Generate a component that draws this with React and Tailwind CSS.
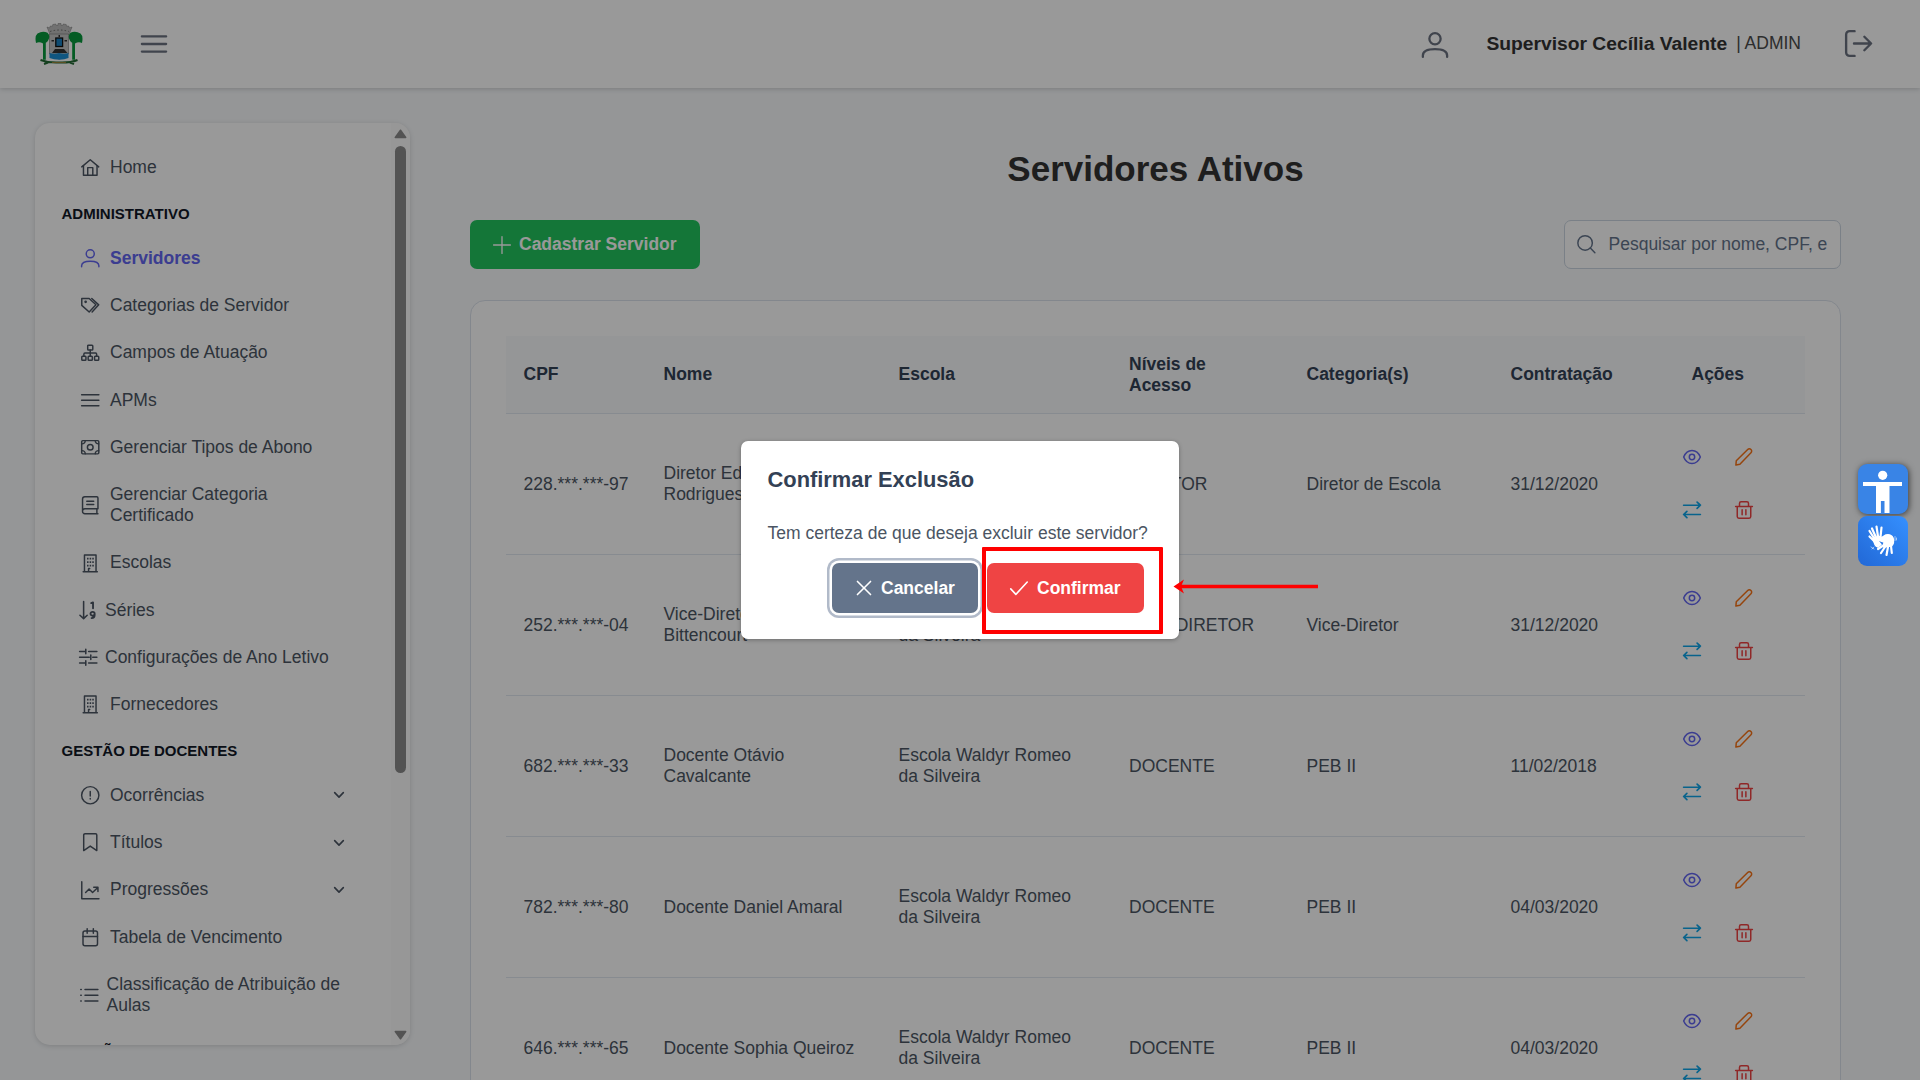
import React from 'react';

const P = {
  home: (<><path d="M1 11.5 12 2.2 23 11.5" /><path d="M3.2 10v12.3h17.6V10" /><path d="M8.7 22V12.5h6.6V22" /></>),
  user: (<><circle cx="12" cy="6.2" r="5.2" /><path d="M.8 23v-1.2c0-3.6 3.3-6 11.2-6s11.2 2.4 11.2 6V23" /></>),
  tags: (<><path d="M1 3.2h9.6l8.8 8.2-8.8 9.4L1 12.2z" /><circle cx="6" cy="7.6" r=".8" /><path d="m14 3.2 9 8.3-8.6 9.3" /></>),
  sitemap: (<><rect x="8.7" y="1.5" width="6.6" height="6.2" rx="1" /><rect x="1" y="15.8" width="5.4" height="5.4" rx="1" /><rect x="9.3" y="15.8" width="5.4" height="5.4" rx="1" /><rect x="17.6" y="15.8" width="5.4" height="5.4" rx="1" /><path d="M12 7.7v8M3.7 15.5v-2.3q0-1.4 1.4-1.4h13.8q1.4 0 1.4 1.4v2.3" /></>),
  bars: (<path d="M.8 5h22.4M.8 12h22.4M.8 19h22.4" />),
  money: (<><rect x=".9" y="3.4" width="22.2" height="17.2" rx="1.4" /><circle cx="12" cy="12" r="3.7" /><path d="M5.5 3.6c0 2.6-1.8 4-4.4 4M18.500 3.6c0 2.600 1.800 4 4.400 4M5.500 20.400c0-2.600-1.800-4-4.400-4M18.500 20.400c0-2.600 1.800-4 4.400-4" /></>),
  book: (<><path d="M22 23H5c-1.800 0-3-1.300-3-3V4c0-1.700 1.200-3 3-3h15.500c.9 0 1.500.6 1.500 1.500V16.600H5c-1.800 0-3 1.400-3 3.200M20.600 16.800V23M7.500 6.700h9M7.500 11h9" /></>),
  building: (<><path d="M4.500 22.800V1.200h15v21.600M2.800 22.900h18.400M9.800 22.500v-3.800h1.500" /><path strokeWidth="2.2" strokeLinecap="butt" d="M7.800 6h2M11.200 6h2M14.600 6h2M7.800 10.500h2M11.200 10.500h2M14.600 10.500h2M7.800 15h2M11.200 15h2M14.600 15h2" /></>),
  sort: (<><path strokeWidth="2" d="M6 .8V22M1.200 18.500 6 22.800l4.600-4.300" /><path strokeWidth="2.400" d="m15.800 2.800 2.400-1v7.600M20.300 16.600a2.700 2.500 0 1 0-5.400 0a2.700 2.500 0 1 0 5.400 0v1.600c0 2.500-1.500 4-4 4" /></>),
  sliders: (<path strokeWidth="2" d="M.8 4.500h7M12.500 4.500h10.700M.8 12h12.500M17.800 12h5.400M.8 19.500h7M12.500 19.500h10.700M8.800 1.500v6M15.300 9v6M8.800 16.500v6" />),
  alert: (<><circle cx="12" cy="12" r="11.200" /><path d="M12 7v6M12 16.300v.5" /></>),
  bookmark: (<path d="M20.500 22.800 12 17l-8.500 5.800V2.700c0-1 .7-1.700 1.700-1.700h13.600c1 0 1.700.7 1.700 1.700z" />),
  chart: (<path d="M1 1v22h22.300M6 15l4.500-4.500 4.500 4.500 6.800-6.500M16.500 8.200h5.500v5.300" />),
  calendar: (<><rect x="2.600" y="4" width="18.800" height="19" rx="2.500" /><path d="M2.600 11h18.800M8 .8v6M16 .8v6" /></>),
  list: (<path strokeWidth="2" d="M6.500 4.500h16.700M6.500 12h16.700M6.500 19.500h16.700M1 4.500h.6M1 12h.6M1 19.500h.6" />),
  chevron: (<path d="m5.500 8.500 6.500 6.700 6.500-6.700" />),
  logout: (<path d="M8.500 23H4.200C2.200 23 1 21.800 1 19.800V4.200C1 2.200 2.200 1 4.200 1h4.300M8 12h15M17.200 6l6 6-6 6" />),
  search: (<><circle cx="10.500" cy="10.300" r="9.400" /><path d="m17.300 17 5.900 6" /></>),
  plus: (<path d="M12 .8v22.400M.8 12h22.400" />),
  eye: (<><path d="M.9 12C3.300 6 7.200 3.300 12 3.300S20.700 6 23.100 12C20.700 18 16.800 20.700 12 20.700S3.300 18 .9 12z" /><circle cx="12" cy="12" r="3.600" /></>),
  pencil: (<path d="M1.200 22.800 1.700 17 16.900 1.900c1.200-1.200 3.200-1.200 4.400 0s1.200 3.200 0 4.400L6.500 21.700l-5.300 1.100z" />),
  exchange: (<path d="M.8 5.600h22.400M18.800 1.400l4.400 4.200-4.400 4.200M23.200 18H.8M5.200 13.800.8 18l4.400 4.200" />),
  trash: (<path d="M.8 7.300h22.400M3 7.300v13.400C3 22 3.900 23 5.200 23h13.600c1.300 0 2.200-1 2.200-2.300V7.300M6 7V3.200C6 1.900 6.800 1 8.100 1h7.800C17.200 1 18 1.900 18 3.200V7M9.500 11.800v6.400M14.500 11.800v6.400" />),
  times: (<path d="m2.200 2.200 19.600 19.600M21.800 2.200 2.200 21.800" />),
  check: (<path d="M1 13.200 7.800 20.500 23 4" />),
};

function Icon({ n, className = 'size-[18.5px]', w = 1.9 }) {
  return (
    <svg viewBox="0 0 24 24" fill="none" stroke="currentColor" strokeWidth={w} strokeLinecap="round" strokeLinejoin="round" className={`shrink-0 overflow-visible ${className}`}>
      {P[n]}
    </svg>
  );
}

function Item({ icon, label, gap = 'pl-[46px] gap-[10.500px]', active, more }) {
  return (
    <div className={`flex items-center py-[13.125px] leading-[21px] ${gap} ${active ? 'font-bold text-[#6366f1]' : 'text-[#4b5563]'}`}>
      <Icon n={icon} />
      <span className="w-[240px]">{label}</span>
      {more && <Icon n="chevron" className="-ml-[30px] size-[16px]" w={2.4} />}
    </div>
  );
}

function Heading({ children }) {
  return <div className="flex h-[43.500px] items-center pl-[26.500px] text-[15px] font-bold text-[#111827]">{children}</div>;
}

const GRID = 'grid grid-cols-[140px_235px_230.500px_177.500px_204px_181px_131px] items-center border-b border-[#e2e8f0] [&>div]:px-[17.500px]';

const rows = [
  ['228.***.***-97', 'Diretor Eduardo Rodrigues', 'Escola Waldyr Romeo da Silveira', 'DIRETOR', 'Diretor de Escola', '31/12/2020'],
  ['252.***.***-04', 'Vice-Diretora Lara Bittencourt', 'Escola Waldyr Romeo da Silveira', 'VICE-DIRETOR', 'Vice-Diretor', '31/12/2020'],
  ['682.***.***-33', 'Docente Otávio Cavalcante', 'Escola Waldyr Romeo da Silveira', 'DOCENTE', 'PEB II', '11/02/2018'],
  ['782.***.***-80', 'Docente Daniel Amaral', 'Escola Waldyr Romeo da Silveira', 'DOCENTE', 'PEB II', '04/03/2020'],
  ['646.***.***-65', 'Docente Sophia Queiroz', 'Escola Waldyr Romeo da Silveira', 'DOCENTE', 'PEB II', '04/03/2020'],
];

function Crest() {
  return (
    <svg viewBox="0 0 48 42" className="h-[42px] w-[48px]">
      <path fill="#bdbdbd" stroke="#777" strokeWidth=".5" d="m12 4 2.500 1 .8-2 2.200.2.300-1.700 3-.5.500 1.500h1.500L23 .5h3l.2 2h1.500l.5-1.500 3 .5.300 1.700 2.200-.2.800 2L37 4l-3 7.500H15z" />
      <path fill="none" stroke="#555" strokeWidth=".8" strokeDasharray="1.500 2.200" d="M15 8.500q9.500-3 19 0" />
      <path fill="#c4c4c4" stroke="#777" strokeWidth=".6" d="M14.500 11h19v20q-4 4-9.500 5-5.500-1-9.500-5z" />
      <rect x="20.800" y="15" width="6.800" height="8.500" fill="#1a7fc0" stroke="#111" strokeWidth="1.300" />
      <path fill="#333" d="M20 26h9l3.500 4H17zM16.500 17h2.500v1.500h-2.500zM29.500 17H32v1.500h-2.500zM23.500 12h1.500v2h-1.500z" />
      <path fill="#1b8fd6" d="M14.500 30q5 1.500 9.500 0 5 1.500 9.500 0v5q-4 1.500-9 1.700-6-.2-10-1.700z" />
      <path fill="#079a3c" d="M1 20q-1.500-7 1.500-9.500 5-3 10-.8 2.500 2.300 1.500 5.800-1.500 4-3.200 4.200v17H8V20.500Q4.500 18.500 1 20zM47 20q1.500-7-1.500-9.500-5-3-10-.8-2.500 2.300-1.500 5.800 1.500 4 3.200 4.200v17H40V20.500q3.500-2 7-.5z" />
      <path fill="none" stroke="#246b35" strokeWidth="2" d="M5.500 37q8 3 18.500 2.500Q35 40 42.500 37M9 41l4-1.500M39 41l-4-1.500" />
      <path stroke="#b58a3a" strokeWidth=".8" d="M17 39.500h14" />
    </svg>
  );
}

export default function App() {
  return (
    <div className="relative h-[1080px] w-[1920px] overflow-hidden bg-[#f8fafc] font-['Liberation_Sans',Arial,sans-serif] text-[17.500px] leading-[21px] text-[#4b5563]">
      <header className="relative flex h-[88px] items-center bg-white pb-[1px] pl-[35px] shadow-[0_1px_5px_rgba(0,0,0,0.18)]">
        <div className="w-[106px]"><Crest /></div>
        <Icon n="bars" className="size-[26px] text-[#6b7280]" w={2.1} />
        <div className="ml-auto flex items-center pr-[48px]">
          <Icon n="user" className="mt-[2px] size-[26px] text-[#6b7280]" w={2.1} />
          <span className="ml-[38px] text-[19.250px] font-bold text-[#333]">Supervisor Cecília Valente</span>
          <span className="ml-[9px] text-[#4b4b4b]">| ADMIN</span>
          <Icon n="logout" className="ml-[44px] size-[27px] text-[#6b7280]" w={2.1} />
        </div>
      </header>

      <div className="flex items-start pl-[35px] pt-[35px]">
        <aside className="flex h-[922px] w-[375px] shrink-0 overflow-hidden rounded-[15px] bg-white shadow-[0_1px_5px_rgba(0,0,0,0.15)]">
          <nav className="h-full w-[356px] overflow-hidden pt-[21px]">
            <Item icon="home" label="Home" />
            <Heading>ADMINISTRATIVO</Heading>
            <Item icon="user" label="Servidores" active />
            <Item icon="tags" label="Categorias de Servidor" />
            <Item icon="sitemap" label="Campos de Atuação" />
            <Item icon="bars" label="APMs" />
            <Item icon="money" label="Gerenciar Tipos de Abono" />
            <Item icon="book" label={<>Gerenciar Categoria<br />Certificado</>} />
            <Item icon="building" label="Escolas" />
            <Item icon="sort" label="Séries" gap="pl-[44px] gap-[7.500px]" />
            <Item icon="sliders" label="Configurações de Ano Letivo" gap="pl-[44px] gap-[7.500px]" />
            <Item icon="building" label="Fornecedores" />
            <Heading>GESTÃO DE DOCENTES</Heading>
            <Item icon="alert" label="Ocorrências" more />
            <Item icon="bookmark" label="Títulos" more />
            <Item icon="chart" label="Progressões" more />
            <Item icon="calendar" label="Tabela de Vencimento" />
            <Item icon="list" label="Classificação de Atribuição de Aulas" gap="pl-[44.500px] gap-[8.500px]" />
            <Heading>GESTÃO</Heading>
          </nav>
          <div className="flex h-full w-[19px] flex-col items-center bg-[#fcfcfc] pt-[6px] pb-[5px]">
            <svg viewBox="0 0 13 10" className="h-[10px] w-[13px]"><path d="M6.500 1.200 11.700 8.500H1.300z" fill="#8b8b8b" stroke="#8b8b8b" strokeWidth="1.500" strokeLinejoin="round" /></svg>
            <div className="mt-[7px] h-[627px] w-[11px] rounded-full bg-[#8b8b8b]" />
            <svg viewBox="0 0 13 10" className="mt-auto h-[10px] w-[13px]"><path d="M6.500 8.800 11.700 1.500H1.300z" fill="#8b8b8b" stroke="#8b8b8b" strokeWidth="1.500" strokeLinejoin="round" /></svg>
          </div>
        </aside>

        <main className="ml-[60px] w-[1371px] shrink-0">
          <h1 className="mt-[25px] text-center text-[35px] leading-[42px] font-bold text-[#333]">Servidores Ativos</h1>
          <div className="mt-[30px] flex h-[49px] justify-between">
            <button className="flex w-[230px] items-center gap-[8px] rounded-[7px] bg-[#22c55e] pl-[23px] font-bold text-white">
              <Icon n="plus" className="size-[18px]" w={1.8} />Cadastrar Servidor
            </button>
            <div className="flex w-[277px] items-center rounded-[7px] border border-[#cbd5e1] bg-white pl-[12px] text-[#64748b]">
              <Icon n="search" />
              <span className="ml-[13px] w-[218px] overflow-hidden whitespace-nowrap">Pesquisar por nome, CPF, e</span>
            </div>
          </div>
          <section className="mt-[31px] rounded-[15px] border border-[#dbe2ec] bg-white px-[35px] pt-[35px] pb-[40px]">
            <div className={`${GRID} h-[78px] bg-[#f8fafc] font-bold text-[#334155]`}>
              <div>CPF</div><div>Nome</div><div>Escola</div><div>Níveis de Acesso</div><div>Categoria(s)</div><div>Contratação</div><div>Ações</div>
            </div>
            {rows.map((r) => (
              <div key={r[0]} className={`${GRID} h-[141px]`}>
                {r.map((c, i) => <div key={i}>{c}</div>)}
                <div className="-mt-[2px] -ml-[26px] grid grid-cols-[52.500px_52.500px] grid-rows-[53px_53px] place-items-center">
                  <Icon n="eye" className="size-[18px] text-[#6366f1]" w={2} />
                  <Icon n="pencil" className="size-[18px] text-[#f97316]" w={2} />
                  <Icon n="exchange" className="size-[18px] text-[#0ea5e9]" w={2.2} />
                  <Icon n="trash" className="size-[18px] text-[#ef4444]" w={2} />
                </div>
              </div>
            ))}
          </section>
        </main>
      </div>

      <div className="absolute inset-0 flex items-center justify-center bg-black/40">
        <div className="h-[198px] w-[438px] rounded-[7px] bg-white pt-[26px] pl-[26.500px] shadow-[0_1px_4px_rgba(0,0,0,0.3)]">
          <h2 className="text-[21.875px] leading-[26px] font-bold text-[#334155]">Confirmar Exclusão</h2>
          <p className="mt-[30px] text-[#4b5563]">Tem certeza de que deseja excluir este servidor?</p>
          <div className="mt-[19px] ml-[64.500px] flex h-[50px] gap-[9px] font-bold text-white">
            <button className="flex w-[146px] items-center rounded-[7px] bg-[#64748b] pl-[24px] shadow-[0_0_0_2.500px_white,0_0_0_5px_#b1bac9]">
              <Icon n="times" className="mr-[9px] size-[16px]" w={2.4} />Cancelar
            </button>
            <button className="flex w-[157px] items-center rounded-[7px] bg-[#ef4444] pl-[23px]">
              <Icon n="check" className="mr-[9px] size-[18px]" w={2.1} />Confirmar
            </button>
          </div>
        </div>
      </div>

      <div className="absolute top-[547px] left-[982px] h-[87px] w-[181px] rounded-[1px] border-4 border-[#ff0000]" />
      <svg viewBox="0 0 146 16" className="absolute top-[579px] left-[1173px] h-[16px] w-[146px]">
        <path d="M7 7.500H145" stroke="#ff0000" strokeWidth="3.600" />
        <path d="M.5 7.500 11 .5 8 7.500l3 7z" fill="#ff0000" />
      </svg>

      <div className="absolute top-[464px] left-[1858px] flex w-[50px] flex-col gap-[2px]">
        <div className="h-[50px] overflow-hidden rounded-[9px] bg-[#3984e6] shadow-[1px_1px_6px_rgba(0,0,0,0.6)]">
          <svg viewBox="0 0 50 50" fill="white"><circle cx="24.700" cy="11.300" r="4.600" /><path d="M5 18h39v4H31.500v27H26.500V37h-3.600v12H18V22H5z" /></svg>
        </div>
        <div className="h-[49.500px] overflow-hidden rounded-[9px] bg-linear-to-tr from-[#2268d6] to-[#3590ff]">
          <svg viewBox="0 0 50 50" fill="none" stroke="white" strokeLinecap="round" strokeLinejoin="round">
            <path strokeWidth="2.200" d="m11.500 15 5 8M14 12.500l4 9M18.500 10.500l1.500 10M23.500 11.500 22.500 21M11.500 20.500l5 5" />
            <path fill="white" strokeWidth="1.500" d="m15.500 22 7-1.500 1 2.500-4 1.500 3.500 4-3 2.500q-4-1-4.500-9z" />
            <path fill="white" strokeWidth="1.500" d="m20 24 8-5q5-1 7 3 1.500 5-1.500 8l-8 1 .5-5z" />
            <path strokeWidth="2.200" d="m26 29-6 4M27 31l-4 6M30 31l-1.500 8M33 30l.8 7" />
            <path strokeWidth=".8" opacity=".7" d="M37 20.500v4M38.500 22v2M13 31l3 2M14 33l2-2" />
          </svg>
        </div>
      </div>
    </div>
  );
}
